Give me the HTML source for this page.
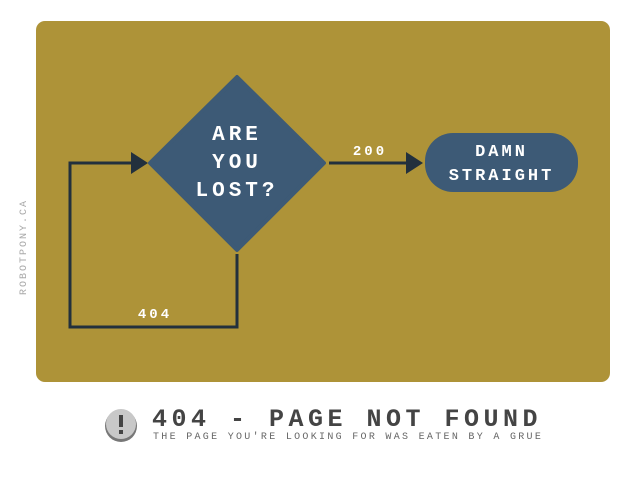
<!DOCTYPE html>
<html><head><style>
body{margin:0;width:640px;height:480px;background:#fff;position:relative;overflow:hidden;font-family:"Liberation Mono",monospace}
.panel{position:absolute;left:36px;top:21px;width:574px;height:361px;background:#ae9338;border-radius:9px}
.t{position:absolute;color:#fff;font-weight:bold;text-align:center}
</style></head><body>
<div class="panel"></div>
<svg width="640" height="480" style="position:absolute;left:0;top:0">
<polygon points="237,77 324,163 237,250 150,163" fill="#3d5a76" stroke="#3d5a76" stroke-width="4" stroke-linejoin="round"/>
<polyline points="237,254 237,327 70,327 70,163 132,163" fill="none" stroke="#22303d" stroke-width="3"/>
<polygon points="131,152 148,163 131,174" fill="#22303d"/>
<line x1="329" y1="163" x2="408" y2="163" stroke="#22303d" stroke-width="3"/>
<polygon points="406,152 423,163 406,174" fill="#22303d"/>
<rect x="425" y="133" width="153" height="59" rx="28" fill="#3d5a76"/>
<circle cx="121" cy="426" r="16" fill="#777"/>
<circle cx="121" cy="424" r="15" fill="#c8c8c8"/>
<rect x="119" y="415" width="4" height="12" fill="#444"/><rect x="119" y="430" width="4" height="4" fill="#444"/>
</svg>
<div class="t" style="left:180px;top:122px;width:114px;font-size:21px;line-height:28px;letter-spacing:4px">ARE<br>YOU<br>LOST?</div>
<div class="t" style="left:345px;top:144px;width:50px;font-size:14px;letter-spacing:3px">200</div>
<div class="t" style="left:120px;top:307px;width:70px;font-size:14px;letter-spacing:3px">404</div>
<div class="t" style="left:425px;top:141px;width:153px;font-size:17px;line-height:24px;letter-spacing:3px">DAMN<br>STRAIGHT</div>
<div style="position:absolute;left:19px;top:295px;transform:rotate(-90deg);transform-origin:0 0;color:#aaa;font-size:10px;letter-spacing:2px;white-space:nowrap">ROBOTPONY.CA</div>
<div style="position:absolute;left:152px;top:405px;color:#444;font-size:25px;font-weight:bold;letter-spacing:4.5px;white-space:nowrap">404 - PAGE NOT FOUND</div>
<div style="position:absolute;left:153px;top:432px;color:#666;font-size:10px;letter-spacing:2.3px;white-space:nowrap">THE PAGE YOU'RE LOOKING FOR WAS EATEN BY A GRUE</div>
</body></html>
